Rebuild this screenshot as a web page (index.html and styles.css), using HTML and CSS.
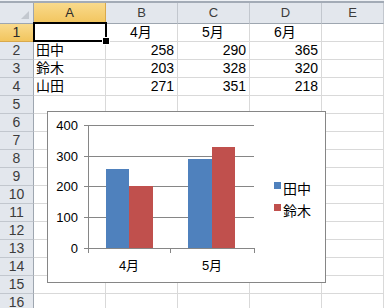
FILE: index.html
```html
<!DOCTYPE html>
<html lang="ja">
<head>
<meta charset="utf-8">
<title>Sheet</title>
<link rel="stylesheet" href="styles.css">
</head>
<body>
<div class="app">
  <div class="topstrip"></div>
  <div class="sheet">
    <div class="corner"><span class="tri"></span></div>
    <div class="colh active">A</div>
    <div class="colh">B</div>
    <div class="colh">C</div>
    <div class="colh">D</div>
    <div class="colh">E</div>

    <div class="rowh active">1</div>
    <div class="cell"></div>
    <div class="cell pad">4月</div>
    <div class="cell pad">5月</div>
    <div class="cell pad">6月</div>
    <div class="cell"></div>

    <div class="rowh">2</div>
    <div class="cell">田中</div>
    <div class="cell num">258</div>
    <div class="cell num">290</div>
    <div class="cell num">365</div>
    <div class="cell"></div>

    <div class="rowh">3</div>
    <div class="cell">鈴木</div>
    <div class="cell num">203</div>
    <div class="cell num">328</div>
    <div class="cell num">320</div>
    <div class="cell"></div>

    <div class="rowh">4</div>
    <div class="cell">山田</div>
    <div class="cell num">271</div>
    <div class="cell num">351</div>
    <div class="cell num">218</div>
    <div class="cell"></div>

    <div class="rowh">5</div><div class="cell"></div><div class="cell"></div><div class="cell"></div><div class="cell"></div><div class="cell"></div>
    <div class="rowh">6</div><div class="cell"></div><div class="cell"></div><div class="cell"></div><div class="cell"></div><div class="cell"></div>
    <div class="rowh">7</div><div class="cell"></div><div class="cell"></div><div class="cell"></div><div class="cell"></div><div class="cell"></div>
    <div class="rowh">8</div><div class="cell"></div><div class="cell"></div><div class="cell"></div><div class="cell"></div><div class="cell"></div>
    <div class="rowh">9</div><div class="cell"></div><div class="cell"></div><div class="cell"></div><div class="cell"></div><div class="cell"></div>
    <div class="rowh">10</div><div class="cell"></div><div class="cell"></div><div class="cell"></div><div class="cell"></div><div class="cell"></div>
    <div class="rowh">11</div><div class="cell"></div><div class="cell"></div><div class="cell"></div><div class="cell"></div><div class="cell"></div>
    <div class="rowh">12</div><div class="cell"></div><div class="cell"></div><div class="cell"></div><div class="cell"></div><div class="cell"></div>
    <div class="rowh">13</div><div class="cell"></div><div class="cell"></div><div class="cell"></div><div class="cell"></div><div class="cell"></div>
    <div class="rowh">14</div><div class="cell"></div><div class="cell"></div><div class="cell"></div><div class="cell"></div><div class="cell"></div>
    <div class="rowh">15</div><div class="cell"></div><div class="cell"></div><div class="cell"></div><div class="cell"></div><div class="cell"></div>
    <div class="rowh">16</div><div class="cell"></div><div class="cell"></div><div class="cell"></div><div class="cell"></div><div class="cell"></div>
  </div>

  <div class="selection"><span class="handle"></span></div>

  <div class="chart">
    <svg class="chart-svg" width="279" height="172" viewBox="47 111 279 172">
      <g stroke="#868686" stroke-width="1" fill="none">
        <line x1="84" y1="125.5" x2="254" y2="125.5"/>
        <line x1="84" y1="156.5" x2="254" y2="156.5"/>
        <line x1="84" y1="186.5" x2="254" y2="186.5"/>
        <line x1="84" y1="217.5" x2="254" y2="217.5"/>
      </g>
      <rect x="106" y="169" width="23" height="79" fill="#4f81bd"/>
      <rect x="129" y="186" width="24" height="62" fill="#c0504d"/>
      <rect x="188" y="159" width="24" height="89" fill="#4f81bd"/>
      <rect x="212" y="147" width="23" height="101" fill="#c0504d"/>
      <g stroke="#868686" stroke-width="1" fill="none">
        <line x1="88.5" y1="125" x2="88.5" y2="249"/>
        <line x1="84" y1="248.5" x2="254" y2="248.5"/>
        <line x1="88.5" y1="248" x2="88.5" y2="253"/>
        <line x1="170.5" y1="248" x2="170.5" y2="253"/>
        <line x1="254.5" y1="248" x2="254.5" y2="253"/>
      </g>
      <g class="axis-label" text-anchor="end">
        <text x="78" y="130">400</text>
        <text x="78" y="161">300</text>
        <text x="78" y="191">200</text>
        <text x="78" y="222">100</text>
        <text x="78" y="253">0</text>
      </g>
      <g class="cat-label" text-anchor="middle">
        <text x="129" y="270">4月</text>
        <text x="212" y="270">5月</text>
      </g>
      <rect x="274" y="182" width="7" height="7" fill="#4f81bd"/>
      <text class="legend" x="283" y="194">田中</text>
      <rect x="274" y="204" width="7" height="7" fill="#c0504d"/>
      <text class="legend" x="283" y="216">鈴木</text>
    </svg>
  </div>
</div>
</body>
</html>
```

FILE: styles.css
```css
html, body {
  margin: 0;
  padding: 0;
  background: #ffffff;
}

.app {
  position: relative;
  width: 384px;
  height: 308px;
  overflow: hidden;
  font-family: "Liberation Sans", "Noto Sans CJK JP", sans-serif;
}

.topstrip {
  height: 3px;
  box-sizing: border-box;
  border-top: 1px solid #eef1f5;
  background: #a3abb6;
}

.sheet {
  display: grid;
  grid-template-columns: 34px 72px 72px 72px 72px 1fr;
  grid-template-rows: 21px repeat(16, 18px);
}

.sheet > div {
  box-sizing: border-box;
  overflow: hidden;
  white-space: nowrap;
}

.corner {
  position: relative;
  background: #e3e7ed;
  border-right: 1px solid #9ea6b0;
  border-bottom: 1px solid #9ea6b0;
}

.tri {
  position: absolute;
  right: 4px;
  bottom: 4px;
  width: 0;
  height: 0;
  border-left: 8px solid transparent;
  border-bottom: 8px solid #c3c8cf;
}

.colh {
  background: #e3e7ed;
  border-right: 1px solid #c2c7ce;
  border-bottom: 1px solid #9ea6b0;
  color: #3c3c3c;
  font-size: 13px;
  line-height: 20px;
  text-align: center;
}

.rowh {
  background: #e3e7ed;
  border-right: 1px solid #9ea6b0;
  border-bottom: 1px solid #c2c7ce;
  color: #3c3c3c;
  font-size: 14px;
  line-height: 17px;
  text-align: center;
}

.colh.active,
.rowh.active {
  background: linear-gradient(#f9da8c, #f2c55e);
  color: #2a2a2a;
}

.colh.active {
  border-right-color: #d9a94b;
  border-bottom-color: #c99a3f;
}

.rowh.active {
  border-bottom-color: #d9a94b;
}

.cell {
  border-right: 1px solid #d9d9d9;
  border-bottom: 1px solid #d9d9d9;
  color: #000000;
  font-size: 14px;
  line-height: 17px;
  padding-left: 2px;
}

.cell.pad {
  padding-left: 24px;
}

.cell.num {
  padding-left: 0;
  padding-right: 3px;
  text-align: right;
}

.selection {
  position: absolute;
  left: 33px;
  top: 22px;
  width: 74px;
  height: 20px;
  box-sizing: border-box;
  border: 2px solid #000000;
}

.handle {
  position: absolute;
  right: -5px;
  bottom: -5px;
  width: 6px;
  height: 6px;
  background: #000000;
  border: 1px solid #ffffff;
}

.chart {
  position: absolute;
  left: 47px;
  top: 111px;
  width: 279px;
  height: 172px;
  box-sizing: border-box;
  border: 1px solid #868686;
  background: #ffffff;
}

.chart-svg {
  position: absolute;
  left: -1px;
  top: -1px;
  display: block;
}

.axis-label text {
  font-family: "Liberation Sans", sans-serif;
  font-size: 13px;
  fill: #000000;
}

.cat-label text {
  font-family: "Liberation Sans", "Noto Sans CJK JP", sans-serif;
  font-size: 13px;
  fill: #000000;
}

.legend {
  font-family: "Noto Sans CJK JP", sans-serif;
  font-size: 14px;
  fill: #000000;
}
```
